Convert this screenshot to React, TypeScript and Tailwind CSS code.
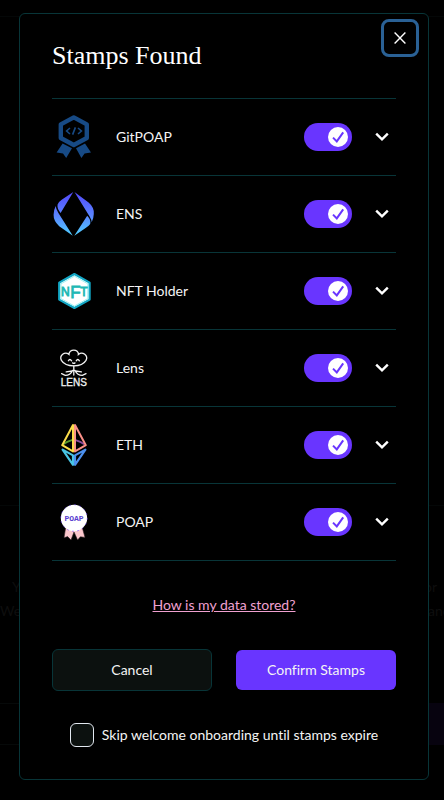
import { useState } from "react";
import type { ReactNode } from "react";

function GitPoapIcon() {
  return (
    <svg viewBox="0 0 44 48" className="h-12 w-11" aria-hidden="true">
      <path d="M21.8 4.4 34.8 11.4V25L21.8 32 8.8 25V11.4Z" fill="none" stroke="#174a85" strokeWidth="4.4" strokeLinejoin="round" />
      <path d="M18 15l-3.4 3 3.4 3M26 15l3.4 3-3.4 3M23.4 14.4l-2.8 7.2" fill="none" stroke="#174a85" strokeWidth="1.6" />
      <path d="M10.6 30.6 20 35.2 14.2 45 11 40.4 4.6 39.6Z M33 30.6 24 35.2 29.4 45 32.6 40.4 39 39.6Z" fill="#174a85" />
    </svg>
  );
}

function EnsIcon() {
  return (
    <svg viewBox="0 0 44 48" className="h-12 w-11" aria-hidden="true">
      <defs>
        <linearGradient id="ens" x1="0" y1="2" x2="0" y2="46" gradientUnits="userSpaceOnUse">
          <stop stopColor="#5348fa" />
          <stop offset="0.55" stopColor="#5a86ff" />
          <stop offset="1" stopColor="#4fd2ff" />
        </linearGradient>
      </defs>
      <g fill="url(#ens)">
        <path d="M21.3 2 8.6 23Q4.8 18.4 5.6 14.6 6.4 12 10 9.6Z" />
        <path d="M22.5 2 36.6 12.6Q42.4 17.6 41.8 24 41.6 28.6 39.7 32.2 39.6 29.6 37.6 26.4Z" />
        <path d="M3.7 16Q4 19 6.4 23L20.8 45.8 7.2 36.2Q1.4 31 1.6 24.8 1.8 19.6 3.7 16Z" />
        <path d="M22.3 45.8 35.2 25.8Q39.2 30 38.2 34 37.2 35.8 34 37.8Z" />
      </g>
    </svg>
  );
}

function NftIcon() {
  return (
    <svg viewBox="0 0 44 48" className="h-12 w-11" aria-hidden="true">
      <path d="M22.4 7 37.6 15.6V32.6L22.4 41 7.2 32.6V15.6Z" fill="#fff" stroke="#12a6c4" strokeWidth="2.2" strokeLinejoin="round" />
      <path d="M22.4 9.2 35.8 16.8V31.6L22.4 39 9 31.6V16.8Z" fill="none" stroke="#9df4f4" strokeWidth="1" />
      <g fill="#20b8b4" stroke="#20b8b4" strokeWidth="0.8" fontFamily="'Liberation Sans', Arial, sans-serif" textAnchor="middle">
        <text x="13.4" y="28.6" fontSize="12">N</text>
        <text x="23.4" y="31" fontSize="17">F</text>
        <text x="32" y="28.6" fontSize="12">T</text>
      </g>
    </svg>
  );
}

function LensIcon() {
  return (
    <svg viewBox="0 0 44 48" className="h-12 w-11" aria-hidden="true">
      <g fill="none" stroke="#f2f2f2" strokeWidth="1.3" strokeLinecap="round">
        <path d="M17 10.4C16.6 4.6 27 4.6 26.4 10.4 30.6 7 36.6 11.6 34 16.4 31.8 20.2 27.4 21.9 21.8 21.9 16.2 21.9 11.6 20 9.4 16.4 7 11.6 12.6 7 17 10.4Z" />
        <path d="M16.4 16.8q1.4-2.6 3.2 0M24.2 16.8q1.6-2.6 3.2 0M20.6 18.9q1.2.8 2.4 0" />
        <path d="M21.8 22v9M20.6 26.4C19.4 29 17 31.4 13.2 31.4L9.6 29.6M23 26.4C24.2 29 26.6 31.4 30.4 31.4L34 29.6M20 27 14.2 27.8M23.6 27 29.4 27.8" />
      </g>
      <text x="21.8" y="42" fontSize="10" fill="#f2f2f2" stroke="#f2f2f2" strokeWidth="0.3" textAnchor="middle" fontFamily="'Liberation Sans', Arial, sans-serif">LENS</text>
    </svg>
  );
}

function EthIcon() {
  return (
    <svg viewBox="0 0 44 48" className="h-12 w-11" aria-hidden="true">
      <g fill="none" strokeLinejoin="round">
        <path d="M20.4 18.8Q14.6 20.4 11.2 23.4" stroke="#5a9a2e" strokeWidth="1.8" />
        <path d="M23 18.8Q28.8 20.4 32.4 23.4" stroke="#8c4a9c" strokeWidth="1.8" />
        <path d="M21 4 10.2 24.2 21 30.4Z" stroke="#fbdc4a" strokeWidth="2" />
        <path d="M23 4 33.8 24.2 23 30.4Z" stroke="#fa9088" strokeWidth="2" />
        <path d="M21 43.8 10.6 28.6 21 34.4Z" stroke="#48c4e4" strokeWidth="2.2" />
        <path d="M23 43.8 33.4 28.6 23 34.4Z" stroke="#4c90ee" strokeWidth="2.2" />
      </g>
    </svg>
  );
}

function PoapIcon() {
  return (
    <svg viewBox="0 0 44 48" className="h-12 w-11" aria-hidden="true">
      <path d="M13.6 30 12 39.8 15.6 38.6 19 42 22 34 25.6 42 28.4 38.8 33 39.4 30.4 30Z" fill="#fbc6cc" stroke="#2e2024" strokeWidth="0.6" />
      <circle cx="22" cy="20" r="13.2" fill="#fff" />
      <circle cx="22" cy="20" r="13.3" fill="none" stroke="#6534ff" strokeWidth="0.5" strokeDasharray="2 3.2" />
      <text x="22" y="22.6" fontSize="8" fontWeight="700" fill="#5a3fd0" textAnchor="middle" fontFamily="'Liberation Mono', monospace">POAP</text>
    </svg>
  );
}

const stamps: { name: string; icon: ReactNode }[] = [
  { name: "GitPOAP", icon: <GitPoapIcon /> },
  { name: "ENS", icon: <EnsIcon /> },
  { name: "NFT Holder", icon: <NftIcon /> },
  { name: "Lens", icon: <LensIcon /> },
  { name: "ETH", icon: <EthIcon /> },
  { name: "POAP", icon: <PoapIcon /> },
];

function Toggle({ label }: { label: string }) {
  const [on, setOn] = useState(true);
  return (
    <label className="relative flex h-7 w-12 cursor-pointer">
      <input
        type="checkbox"
        role="switch"
        aria-label={label}
        checked={on}
        onChange={() => setOn(!on)}
        className="peer h-7 w-12 cursor-pointer appearance-none rounded-full bg-gray-700 checked:bg-[#6935ff]"
      />
      <span className="pointer-events-none absolute top-1 left-1 flex size-5 items-center justify-center rounded-full bg-white peer-checked:left-6">
        <svg viewBox="0 0 20 20" className="size-5" aria-hidden="true">
          <path d="M5 10.6 8.8 14.4 15.2 5.4" fill="none" stroke="#6935ff" strokeWidth="2" />
        </svg>
      </span>
    </label>
  );
}

function Backdrop() {
  return (
    <div className="col-start-1 row-start-1 flex flex-col overflow-hidden pt-4 text-[#0e0e0e]" aria-hidden="true">
      <div className="h-[490px] border-y border-[#040707]" />
      <div className="mt-[69px] flex justify-between px-3">
        <span>Y</span>
        <span className="w-2">or</span>
      </div>
      <div className="flex justify-between">
        <span>We</span>
        <span className="w-4">and</span>
      </div>
      <div className="mt-20 flex h-[42px] justify-between">
        <div className="w-1/2 border-y border-[#060909]" />
        <div className="w-1/2 bg-[#07030f]" />
      </div>
    </div>
  );
}

export default function App() {
  return (
    <main className="grid min-h-screen bg-black font-[Lato,sans-serif] text-sm leading-6 text-[#f4f4f4] [font-variant-ligatures:none]">
      <Backdrop />
      <div className="z-10 col-start-1 row-start-1 pt-[13px] pr-[15px] pb-5 pl-[19px]">
        <section role="dialog" aria-labelledby="title" className="relative rounded-md border border-[#083538] bg-black px-8 pb-8">
          <button
            type="button"
            aria-label="Close"
            className="absolute top-[5px] right-[9px] flex size-[38px] items-center justify-center rounded-lg border-3 border-[#2a6195]"
          >
            <svg viewBox="0 0 12 12" className="size-3" aria-hidden="true">
              <path d="M.6.6 11.4 11.4M11.4.6.6 11.4" stroke="#fff" strokeWidth="1.4" />
            </svg>
          </button>
          <h1 id="title" className="pt-[26px] pb-[26px] font-['Liberation_Serif',serif] text-[26px] leading-8 text-white">
            Stamps Found
          </h1>
          <ul className="border-t border-[#083538]">
            {stamps.map((stamp) => (
              <li key={stamp.name} className="flex h-[77px] items-center border-b border-[#083538]">
                {stamp.icon}
                <span className="ml-5 grow">{stamp.name}</span>
                <Toggle label={stamp.name} />
                <button type="button" aria-label={`Show ${stamp.name} details`} className="ml-4 flex h-7 w-7 items-center justify-center">
                  <svg viewBox="0 0 14 10" className="h-[10px] w-[14px]" aria-hidden="true">
                    <path d="M1.2 1.6 7 7.4 12.8 1.6" fill="none" stroke="#fff" strokeWidth="2.4" />
                  </svg>
                </button>
              </li>
            ))}
          </ul>
          <div className="mt-8 text-center">
            <a href="#storage" className="text-[#f0a0d0] underline">
              How is my data stored?
            </a>
          </div>
          <div className="mt-8 grid grid-cols-2 items-center gap-6">
            <button type="button" className="h-[42px] rounded-md border border-[#083538] bg-[#0c110f]">
              Cancel
            </button>
            <button type="button" className="h-10 rounded-md bg-[#6935ff]">
              Confirm Stamps
            </button>
          </div>
          <div className="mt-8 flex items-center justify-center gap-2">
            <input id="skip" type="checkbox" className="size-6 shrink-0 appearance-none rounded-md border border-[#e2e8f0] bg-[#0c110f] checked:bg-[#6935ff]" />
            <label htmlFor="skip" className="whitespace-nowrap">Skip welcome onboarding until stamps expire</label>
          </div>
        </section>
      </div>
    </main>
  );
}
